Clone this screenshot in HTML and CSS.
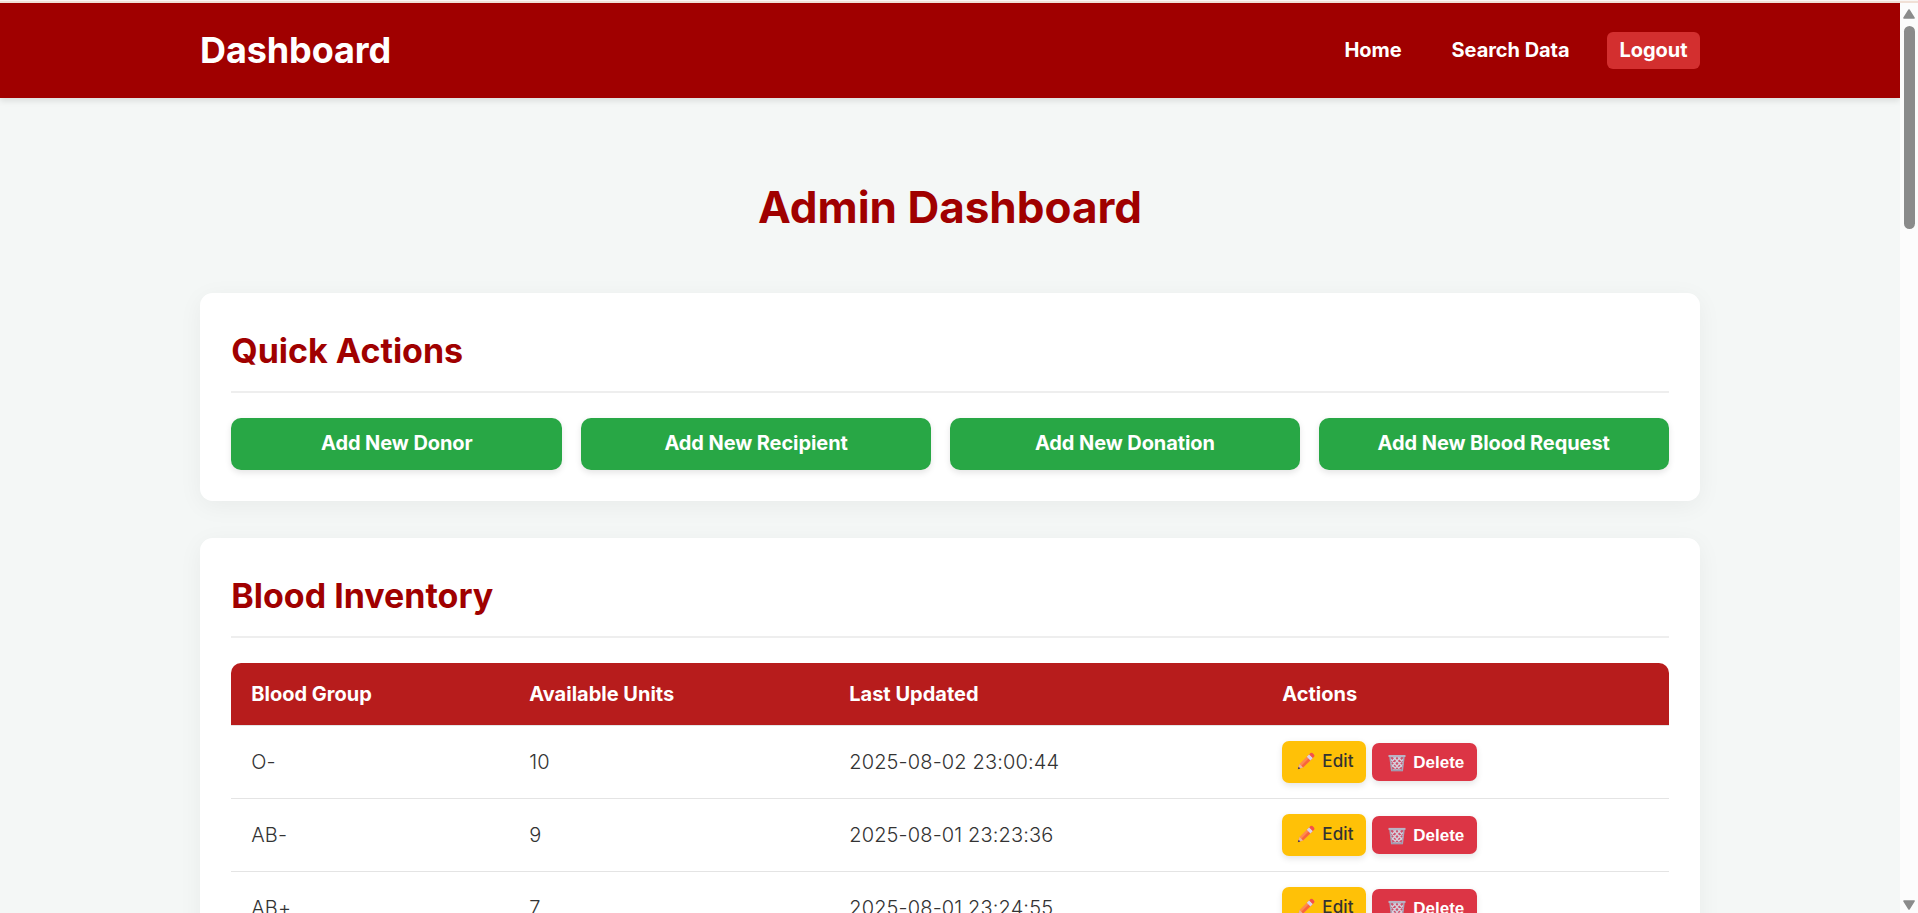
FILE: index.html
```html
<!DOCTYPE html>
<html lang="en">
<head>
<meta charset="utf-8">
<title>Dashboard</title>
<link rel="stylesheet" href="styles.css">
</head>
<body>
<svg class="defs" width="0" height="0">
  <symbol id="pencil" viewBox="0 0 18 18">
    <path d="M1 17l1.600-5L12 2.600l3.600 3.600L6 15.600z" fill="#ff8a4c"/>
    <path d="M4.300 13.800L13.700 4.300l1.900 1.900L6 15.600z" fill="#f9653c"/>
    <path d="M1 17l1.600-5 3.400 3.600z" fill="#e8b79c"/>
    <path d="M.8 17.200l.8-2.500 1.800 1.800z" fill="#4b3550"/>
    <path d="M9.800 4.800l2.500-2.500 3.600 3.600-2.500 2.500z" fill="#d8d3ea"/>
    <path d="M12.200 2.400l1.300-1.300q1-.8 2 0l1.600 1.600q.8 1 0 2l-1.300 1.200z" fill="#f4504a"/>
  </symbol>
  <symbol id="bin" viewBox="0 0 18 18">
    <path d="M2 2.500h14l-1.700 14H3.700z" fill="#d0506c"/>
    <path d="M2.500 5l10 11M5.500 3l9 10M10 3l5 5.500M3 10l6 6M15.500 5l-10 11M12.500 3l-9 10M8 3L3 8.500M15 10l-6 6" fill="none" stroke="#d5d2de" stroke-width="1.300"/>
    <path d="M2 2.500h14l-1.700 14H3.700z" fill="none" stroke="#aaa5b8" stroke-width="1.500"/>
    <path d="M.5 1.900h17" stroke="#b9b4c4" stroke-width="2"/>
    <path d="M3.500 16.300h11" stroke="#a09aae" stroke-width="1.600"/>
  </symbol>
</svg>
<div class="window-edge"></div>
<div class="viewport">
  <div class="page">
    <header class="header">
      <div class="container header-row">
        <div class="brand">Dashboard</div>
        <nav class="nav">
          <a>Home</a><a>Search Data</a><a class="logout">Logout</a>
        </nav>
      </div>
    </header>
    <main class="container">
      <h1 class="title">Admin Dashboard</h1>
      <section class="card">
        <h2 class="card-title">Quick Actions</h2>
        <div class="actions">
          <a class="action">Add New Donor</a><a class="action">Add New Recipient</a><a class="action">Add New Donation</a><a class="action">Add New Blood Request</a>
        </div>
      </section>
      <section class="card">
        <h2 class="card-title">Blood Inventory</h2>
        <div class="table">
          <div class="row head"><span>Blood Group</span><span>Available Units</span><span>Last Updated</span><span>Actions</span></div>
          <div class="row"><span>O-</span><span>10</span><span>2025-08-02 23:00:44</span><div class="ops"><a class="edit"><svg class="ico"><use href="#pencil"/></svg>Edit</a><button class="delete"><svg class="ico"><use href="#bin"/></svg>Delete</button></div></div>
          <div class="row"><span>AB-</span><span>9</span><span>2025-08-01 23:23:36</span><div class="ops"><a class="edit"><svg class="ico"><use href="#pencil"/></svg>Edit</a><button class="delete"><svg class="ico"><use href="#bin"/></svg>Delete</button></div></div>
          <div class="row"><span>AB+</span><span>7</span><span>2025-08-01 23:24:55</span><div class="ops"><a class="edit"><svg class="ico"><use href="#pencil"/></svg>Edit</a><button class="delete"><svg class="ico"><use href="#bin"/></svg>Delete</button></div></div>
        </div>
      </section>
    </main>
  </div>
  <aside class="scrollbar">
    <svg width="12" height="10" viewBox="0 0 12 10"><path d="M6 1l5 8H1z" fill="#8b8b8b" stroke="#8b8b8b" stroke-width="1.600" stroke-linejoin="round"/></svg>
    <div class="thumb"></div>
    <svg class="down" width="12" height="10" viewBox="0 0 12 10"><path d="M6 9l5-8H1z" fill="#8b8b8b" stroke="#8b8b8b" stroke-width="1.600" stroke-linejoin="round"/></svg>
  </aside>
</div>
</body>
</html>
```
FILE: styles.css
```css
* { box-sizing: border-box; }
body {
  margin: 0;
  height: 913px;
  overflow: hidden;
  display: flex;
  flex-direction: column;
  font-family: Inter, sans-serif;
  font-size: 20px;
  color: #333;
}
.defs { position: absolute; }
.window-edge {
  height: 3px;
  flex: none;
  background: #f0e0d6;
  border-top: 1px solid #f9f6f4;
}
.viewport { display: flex; flex: 1; min-height: 0; }
.page { flex: 1; overflow: hidden; background: #f4f7f6; }
.container { width: 1500px; margin: 0 auto; }
.header {
  height: 95px;
  background: #a00000;
  box-shadow: 0 2.5px 6px rgba(0, 0, 0, .1);
}
.header-row { height: 100%; display: flex; align-items: center; justify-content: space-between; }
.brand { padding-bottom: 2px; font-size: 36px; font-weight: 700; color: #fff; letter-spacing: -.1px; }
.nav { display: flex; gap: 25px; }
.nav a {
  height: 37px;
  padding: 0 12.500px;
  line-height: 36px;
  border-radius: 6px;
  font-weight: 650;
  letter-spacing: -.05px;
  color: #fff;
}
.nav .logout { background: #d32f2f; }
.title {
  margin: 76px 0 52px;
  line-height: 67px;
  text-align: center;
  font-size: 44px;
  font-weight: 650;
  color: #a00000;
}
.card {
  margin-bottom: 37px;
  padding: 31px 31.250px;
  border-radius: 12.500px;
  background: #fff;
  box-shadow: 0 5px 25px rgba(0, 0, 0, .05);
}
.card-title {
  margin: 0 0 25px;
  height: 69px;
  line-height: 53px;
  border-bottom: 2px solid #eee;
  font-size: 34px;
  font-weight: 650;
  color: #a00000;
}
.actions { display: grid; grid-template-columns: 331fr 350fr 350fr 350fr; gap: 18.750px; }
.action {
  height: 52px;
  line-height: 51px;
  border-radius: 10px;
  background: #28a745;
  box-shadow: 0 2.500px 6px rgba(0, 0, 0, .1);
  color: #fff;
  text-align: center;
  font-weight: 650;
  letter-spacing: -.08px;
}
.table { overflow: hidden; border-radius: 10px; }
.row {
  display: grid;
  grid-template-columns: 278px 320px 433px 1fr;
  align-items: center;
  height: 73px;
  border-bottom: 1px solid #e4e4e4;
  font-weight: 300;
  letter-spacing: .14px;
}
.row > * { padding-left: 20px; }
.head { height: 63px; background: #b71c1c; background-clip: padding-box; color: #fff; font-weight: 700; letter-spacing: 0; }
.ops { display: flex; align-items: center; gap: 6px; letter-spacing: 0; }
.edit, .delete {
  display: flex;
  align-items: center;
  border: 0;
  border-radius: 7px;
  box-shadow: 0 2.500px 6px rgba(0, 0, 0, .1);
}
.edit { width: 84px; height: 42px; padding: 0 0 2px 15px; background: #ffc107; font-size: 17px; font-weight: 500; letter-spacing: .15px; color: #333; }
.delete { width: 105px; height: 38px; padding: 1px 0 0 16px; background: #dc3545; font: bold 17px "Liberation Sans", Arial, sans-serif; color: #fff; }
.ico { width: 18px; height: 18px; margin-right: 7px; flex: none; }
.scrollbar {
  width: 18px;
  padding: 6px 0 3px;
  display: flex;
  flex-direction: column;
  align-items: center;
  background: #fcfcfc;
}
.thumb { width: 11px; height: 203px; margin-top: 7px; border-radius: 6px; background: #8b8b8b; }
.down { margin-top: auto; }
```
